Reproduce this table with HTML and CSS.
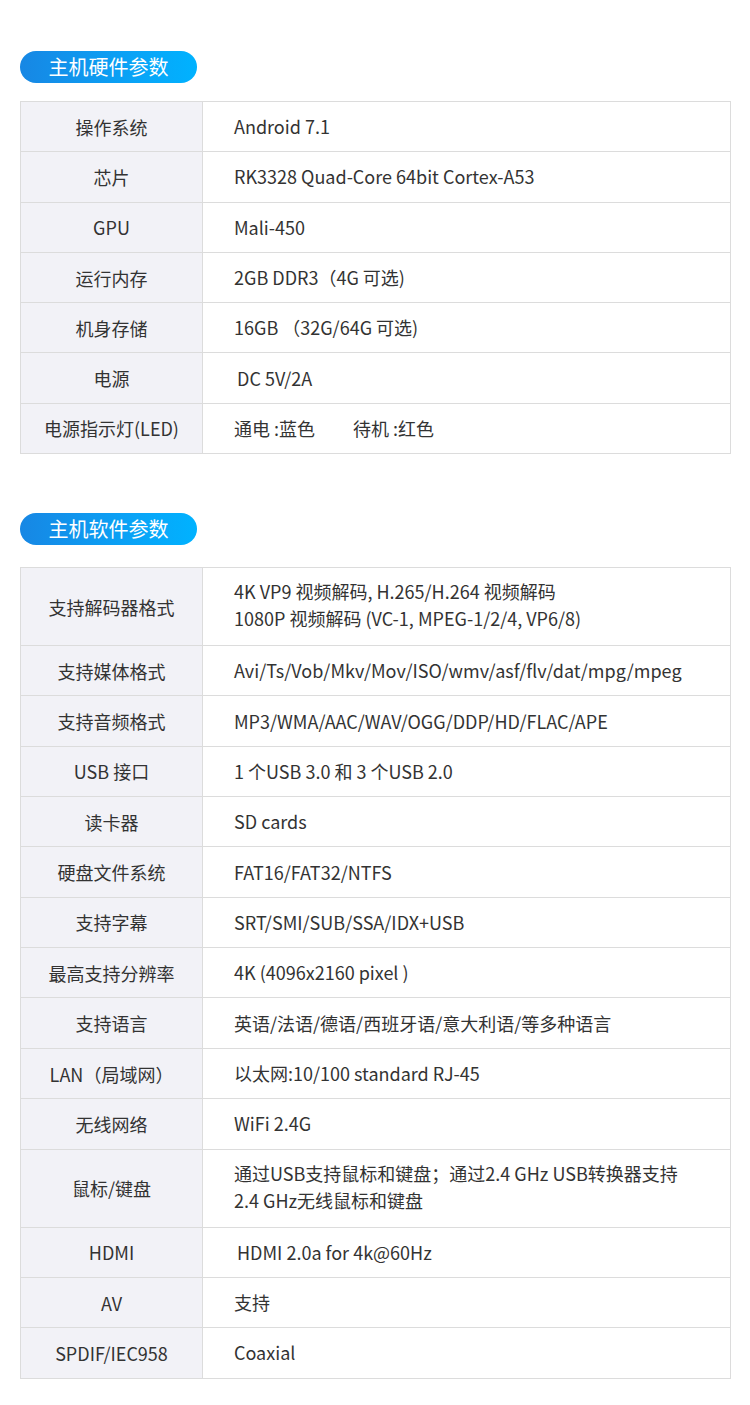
FILE: index.html
```html
<!DOCTYPE html>
<html lang="zh-CN">
<head>
<meta charset="utf-8">
<link rel="stylesheet" href="styles.css">
</head>
<body>
<div class="page">
  <section class="sec sec-hw">
    <div class="pill">主机硬件参数</div>
    <div class="table">
      <div class="row"><div class="k">操作系统</div><div class="v">Android 7.1</div></div>
      <div class="row"><div class="k">芯片</div><div class="v">RK3328 Quad-Core 64bit Cortex-A53</div></div>
      <div class="row"><div class="k">GPU</div><div class="v">Mali-450</div></div>
      <div class="row"><div class="k">运行内存</div><div class="v">2GB DDR3（4G 可选)</div></div>
      <div class="row"><div class="k">机身存储</div><div class="v">16GB （32G/64G 可选)</div></div>
      <div class="row"><div class="k">电源</div><div class="v shift">DC 5V/2A</div></div>
      <div class="row"><div class="k">电源指示灯(LED)</div><div class="v">通电 :蓝色<span class="gap"></span>待机 :红色</div></div>
    </div>
  </section>
  <section class="sec sec-sw">
    <div class="pill">主机软件参数</div>
    <div class="table">
      <div class="row tall"><div class="k">支持解码器格式</div><div class="v">4K VP9 视频解码, H.265/H.264 视频解码<br>1080P 视频解码 (VC-1, MPEG-1/2/4, VP6/8)</div></div>
      <div class="row"><div class="k">支持媒体格式</div><div class="v">Avi/Ts/Vob/Mkv/Mov/ISO/wmv/asf/flv/dat/mpg/mpeg</div></div>
      <div class="row"><div class="k">支持音频格式</div><div class="v">MP3/WMA/AAC/WAV/OGG/DDP/HD/FLAC/APE</div></div>
      <div class="row"><div class="k">USB 接口</div><div class="v">1 个USB 3.0 和 3 个USB 2.0</div></div>
      <div class="row"><div class="k">读卡器</div><div class="v">SD cards</div></div>
      <div class="row"><div class="k">硬盘文件系统</div><div class="v">FAT16/FAT32/NTFS</div></div>
      <div class="row"><div class="k">支持字幕</div><div class="v">SRT/SMI/SUB/SSA/IDX+USB</div></div>
      <div class="row"><div class="k">最高支持分辨率</div><div class="v">4K (4096x2160 pixel )</div></div>
      <div class="row"><div class="k">支持语言</div><div class="v">英语/法语/德语/西班牙语/意大利语/等多种语言</div></div>
      <div class="row"><div class="k">LAN（局域网）</div><div class="v">以太网:10/100 standard RJ-45</div></div>
      <div class="row"><div class="k">无线网络</div><div class="v">WiFi 2.4G</div></div>
      <div class="row tall"><div class="k">鼠标/键盘</div><div class="v">通过USB支持鼠标和键盘；通过2.4 GHz USB转换器支持<br>2.4 GHz无线鼠标和键盘</div></div>
      <div class="row"><div class="k">HDMI</div><div class="v shift">HDMI 2.0a for 4k@60Hz</div></div>
      <div class="row"><div class="k">AV</div><div class="v">支持</div></div>
      <div class="row"><div class="k">SPDIF/IEC958</div><div class="v">Coaxial</div></div>
    </div>
  </section>
</div>
</body>
</html>
```
FILE: styles.css
```css
html, body {
  margin: 0;
  padding: 0;
  background: #ffffff;
}
body {
  font-family: "Noto Sans CJK SC", "Noto Sans", sans-serif;
  color: #333333;
}
.page {
  width: 750px;
  height: 1405px;
  padding-left: 20px;
  box-sizing: border-box;
}
.sec-hw {
  padding-top: 51px;
}
.sec-sw {
  padding-top: 59px;
}
.pill {
  width: 177px;
  height: 32px;
  border-radius: 16px;
  background: linear-gradient(90deg, #1787e4 0%, #08a6f8 70%, #00b2ff 100%);
  color: #ffffff;
  font-size: 20px;
  line-height: 32px;
  text-align: center;
}
.sec-hw .pill {
  margin-bottom: 18px;
}
.sec-sw .pill {
  margin-bottom: 22px;
}
.table {
  width: 711px;
  border: 1px solid #dcdcdc;
  border-bottom: none;
  box-sizing: border-box;
}
.row {
  display: flex;
  height: 50.3px;
  border-bottom: 1px solid #dcdcdc;
  box-sizing: border-box;
}
.sec-sw .row {
  height: 50.35px;
}
.sec-sw .row.tall {
  height: 78px;
}
.k {
  width: 181px;
  flex: none;
  background: #f2f2f7;
  border-right: 1px solid #dcdcdc;
  display: flex;
  align-items: center;
  justify-content: center;
  font-size: 18px;
}
.v {
  flex: 1;
  display: flex;
  align-items: center;
  padding-left: 31px;
  font-size: 18px;
  line-height: 27px;
}
.row.tall .v {
  display: block;
  padding-top: 10px;
}
.v.shift {
  padding-left: 34px;
}
.gap {
  display: inline-block;
  width: 38px;
}
```
